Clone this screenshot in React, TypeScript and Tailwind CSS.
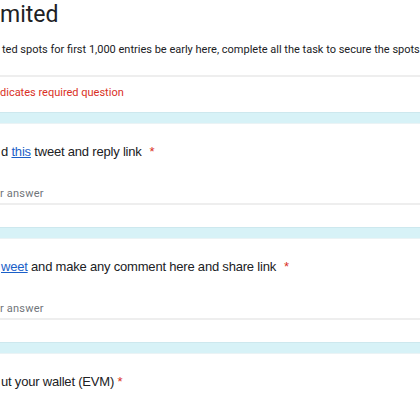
import React from "react";

const roboto = "font-['Roboto','Liberation_Sans',sans-serif]";
const arial = "font-['Liberation_Sans','Arial',sans-serif]";

function Band() {
  return <div className="h-[12px] bg-[#d7f2f7] border-t border-[#cde8ee] border-b border-b-[#eaf3f5]" />;
}

function Question({ children, top }: { children: React.ReactNode; top?: boolean }) {
  return (
    <div className="bg-white h-[103px] flex flex-col">
      <div className={`${arial} text-[13px] tracking-[-0.2px] text-[#202124] pt-[20px] pl-[1px] leading-[16px] whitespace-nowrap`}>
        {children}
      </div>
      {top !== false && (
        <>
          <div className={`${roboto} text-[11px] tracking-[0.2px] text-[#70757a] mt-[27px] leading-[14px] whitespace-nowrap`}>
            r answer
          </div>
          <div className="mt-[2px] h-[2px] bg-[#eeeeee]" />
        </>
      )}
    </div>
  );
}

function Star() {
  return <span className="text-[#d93025] ml-[8px]">*</span>;
}

export default function App(): React.JSX.Element {
  return (
    <div className="w-[420px] h-[420px] overflow-hidden bg-white">
      <div className="bg-white">
        <div className={`${roboto} text-[23px] leading-[28px] text-[#202124] pt-[1px] whitespace-nowrap`}>mited</div>
        <div className={`${roboto} text-[11px] leading-[16px] text-[#202124] mt-[13px] pl-[2px] whitespace-nowrap`}>
          ted spots for first 1,000 entries be early here, complete all the task to secure the spots
        </div>
        <div className="mt-[17px] h-[2px] bg-[#eeeeee]" />
        <div className={`${roboto} text-[11px] leading-[14px] text-[#d93025] mt-[9px] whitespace-nowrap`}>
          dicates required question
        </div>
        <div className="h-[12px]" />
      </div>
      <Band />
      <Question>
        d <a className="text-[#1a5fc8] underline">this</a> tweet and reply link
        <Star />
      </Question>
      <Band />
      <Question>
        <a className="text-[#1a5fc8] underline">weet</a> and make any comment here and share link
        <Star />
      </Question>
      <Band />
      <Question top={false}>
        ut your wallet (EVM) <span className="text-[#d93025]">*</span>
      </Question>
    </div>
  );
}
